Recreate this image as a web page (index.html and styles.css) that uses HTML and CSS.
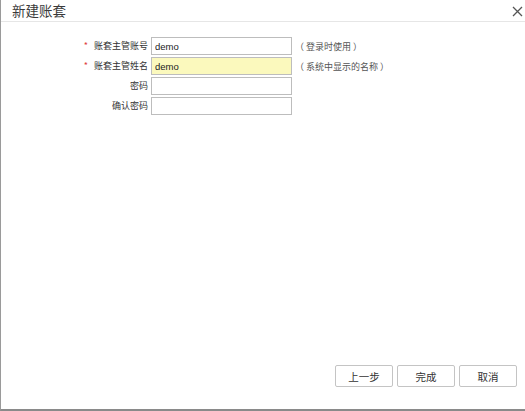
FILE: index.html
```html
<!DOCTYPE html>
<html lang="zh-CN">
<head>
<meta charset="utf-8">
<title>新建账套</title>
<link rel="stylesheet" href="styles.css">
</head>
<body>
<div class="dialog">
  <div class="header">
    <span class="title">新建账套</span>
    <span class="close">
      <svg width="11" height="11" viewBox="0 0 11 11"><path d="M1 1 L10 10 M10 1 L1 10" stroke="#555" stroke-width="1.3" fill="none"/></svg>
    </span>
  </div>
  <div class="body">
    <div class="form">
      <div class="row">
        <label class="label"><span class="req">*</span>账套主管账号</label>
        <input class="field" type="text" value="demo">
        <span class="hint">（ 登录时使用 ）</span>
      </div>
      <div class="row">
        <label class="label"><span class="req">*</span>账套主管姓名</label>
        <input class="field active" type="text" value="demo">
        <span class="hint">（ 系统中显示的名称 ）</span>
      </div>
      <div class="row">
        <label class="label">密码</label>
        <input class="field" type="password" value="">
      </div>
      <div class="row">
        <label class="label">确认密码</label>
        <input class="field" type="password" value="">
      </div>
    </div>
    <div class="footer">
      <button class="btn">上一步</button>
      <button class="btn">完成</button>
      <button class="btn">取消</button>
    </div>
  </div>
</div>
</body>
</html>
```
FILE: styles.css
```css
html, body {
  margin: 0;
  padding: 0;
  background: #fff;
}
.dialog {
  width: 525px;
  height: 411px;
  box-sizing: border-box;
  border-left: 1px solid #9a9a9a;
  border-bottom: 2px solid #8a8a8a;
  display: flex;
  flex-direction: column;
  font-family: "Noto Sans CJK SC", "Liberation Sans", sans-serif;
  color: #333;
}
.header {
  height: 21px;
  border-bottom: 1px solid #e6e6e6;
  display: flex;
  align-items: center;
  justify-content: space-between;
  padding: 0 2px 0 11px;
  flex: none;
}
.title {
  font-size: 13.5px;
  line-height: 21px;
  color: #3a3a3a;
}
.close {
  display: flex;
  margin-top: 1px;
}
.body {
  flex: 1;
  display: flex;
  flex-direction: column;
}
.form {
  padding-top: 15px;
  display: flex;
  flex-direction: column;
  gap: 2px;
}
.row {
  display: flex;
  align-items: center;
  height: 18px;
}
.label {
  width: 150px;
  padding-right: 3px;
  box-sizing: border-box;
  text-align: right;
  font-size: 9px;
  line-height: 18px;
  color: #333;
}
.req {
  color: #e04040;
  margin-right: 6px;
}
.field {
  width: 141px;
  height: 18px;
  box-sizing: border-box;
  margin: 0;
  border: 1px solid #bdbdbd;
  padding: 0 3px;
  font-family: "Liberation Sans", Arial, sans-serif;
  font-size: 9.5px;
  color: #222;
  background: #fff;
  outline: none;
}
.field.active {
  background: #fbf9bd;
}
.hint {
  margin-left: 3px;
  font-size: 9px;
  color: #555;
}
.footer {
  margin-top: auto;
  display: flex;
  justify-content: flex-end;
  gap: 4px;
  padding: 0 8px 22px 0;
}
.btn {
  width: 58px;
  height: 22px;
  box-sizing: border-box;
  margin: 0;
  border: 1px solid #c4c4c4;
  border-radius: 2px;
  background: #fff;
  font-family: "Noto Sans CJK SC", "Liberation Sans", sans-serif;
  font-size: 10.5px;
  color: #333;
  padding: 0;
}
```
